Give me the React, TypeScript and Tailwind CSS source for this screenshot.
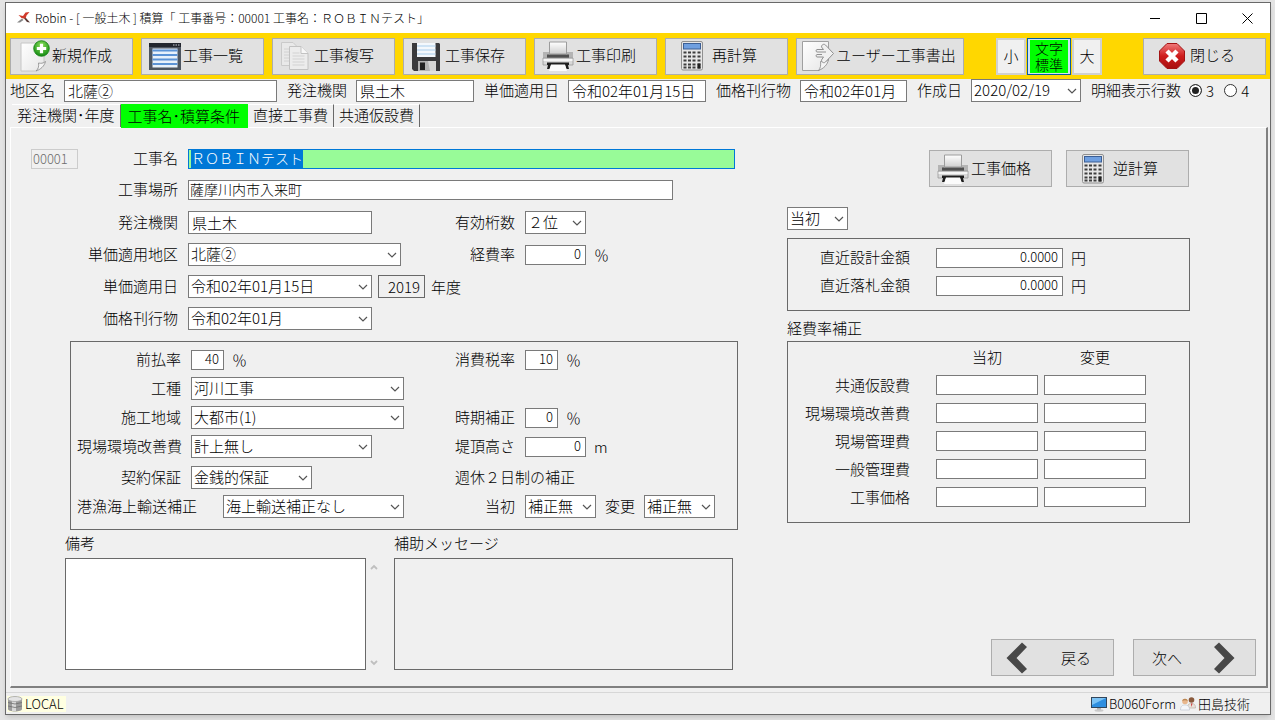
import { useEffect, useRef, useState } from 'react'
import type { InputHTMLAttributes, ReactNode } from 'react'
import clsx from 'clsx'

/* ---------- icons ---------- */

function NewIcon() {
  return (
    <svg width="32" height="32" viewBox="0 0 32 32" aria-hidden="true">
      <defs>
        <linearGradient id="paper" x1="0" y1="0" x2="1" y2="1">
          <stop offset="0" stopColor="#ffffff" />
          <stop offset="1" stopColor="#e6e6e6" />
        </linearGradient>
        <radialGradient id="plus" cx="0.5" cy="0.3" r="0.7">
          <stop offset="0" stopColor="#8be05a" />
          <stop offset="1" stopColor="#128a12" />
        </radialGradient>
      </defs>
      <path d="M3 3H26V22L18 31H3Z" fill="url(#paper)" stroke="#c6c6c6" />
      <path d="M27.500 21.500C25 23.500 23 23.500 20.500 23C21 26 20.500 29 18 31C22.500 29.500 26.500 26 27.500 21.500Z" fill="#f5f5f5" stroke="#8a8a8a" strokeWidth="0.8" />
      <circle cx="23.500" cy="8.500" r="7.800" fill="url(#plus)" stroke="#0f7d0f" strokeWidth="0.8" />
      <path d="M23.500 3.800V13.200M18.800 8.500H28.200" stroke="#fff" strokeWidth="3.200" />
    </svg>
  )
}

function ListIcon() {
  return (
    <svg width="32" height="32" viewBox="0 0 32 32" aria-hidden="true">
      <path d="M0 3H32V30H0Z" fill="#4d5560" />
      <path d="M0 3H32V7H0Z" fill="#22262e" />
      <path d="M24 5h1.500M26.500 5h1.500M29 5h1.500" stroke="#c9ced6" strokeWidth="1" />
      <path d="M3.500 8.500H28.500V27.500H3.500Z" fill="#e8f1fb" />
      <path d="M3.500 10.500h25M3.500 15h25M3.500 19.500h25M3.500 24h25" stroke="#5c93d6" strokeWidth="2.200" />
    </svg>
  )
}

function CopyIcon() {
  return (
    <svg width="32" height="32" viewBox="0 0 32 32" aria-hidden="true">
      <path d="M1.500 2.500H13L18.500 8V25.500H1.500Z" fill="#e9e9e9" stroke="#cacaca" />
      <path d="M4 9h6M4 12h6M4 15h6M4 18h6M4 21h6" stroke="#d2d2d2" />
      <path d="M9.500 6.500H21L28 13.500V29.500H9.500Z" fill="#ececec" stroke="#c2c2c2" />
      <path d="M21 6.500V13.500H28" fill="#f8f8f8" stroke="#c2c2c2" />
      <path d="M12.500 13h7M12.500 16h12M12.500 19h12M12.500 22h12M12.500 25h12" stroke="#d2d2d2" />
    </svg>
  )
}

function SaveIcon() {
  return (
    <svg width="32" height="32" viewBox="0 0 32 32" aria-hidden="true">
      <path d="M1 3H28L29 4V31H3L1 29Z" fill="#3a3a3c" />
      <path d="M6 3H24.500V17H6Z" fill="#f4f8fc" />
      <path d="M6 6h18.500M6 10h18.500M6 14h18.500" stroke="#a8cdec" strokeWidth="1" />
      <path d="M7 21H25V31H7Z" fill="#b4b4b4" />
      <path d="M9 22.500H14V30H9Z" fill="#222" />
      <path d="M17 21H25V31H19Z" fill="#d6d6d6" />
    </svg>
  )
}

function PrinterIcon() {
  return (
    <svg width="32" height="32" viewBox="0 0 32 32" aria-hidden="true">
      <defs>
        <linearGradient id="sheet" x1="0" y1="0" x2="0" y2="1">
          <stop offset="0" stopColor="#ffffff" />
          <stop offset="1" stopColor="#cfcfcf" />
        </linearGradient>
      </defs>
      <path d="M1 12H7V17H25V12H31V19H1Z" fill="#b4b4b4" />
      <path d="M7.500 2H24.500V14H7.500Z" fill="url(#sheet)" stroke="#9c9c9c" />
      <path d="M5 14.500H27V18H5Z" fill="#505050" />
      <path d="M1 18H31V25H1Z" fill="#d8d8d8" stroke="#9a9a9a" strokeWidth="0.800" />
      <path d="M1.500 20H30.500" stroke="#fff" strokeWidth="1.500" />
      <path d="M5 22.500H27V25H26L27 29H24.500L23 25H9L7.500 29H5L6 25H5Z" fill="#1e1e1e" />
      <path d="M9 24.500H23L25 31H7Z" fill="#fbfbfb" />
    </svg>
  )
}

const keyRows = [11.5, 15.5, 19.5, 23.5, 26.5]
const keyCols = [3.5, 8, 12.5, 17.5]

function CalculatorIcon() {
  return (
    <svg width="24" height="32" viewBox="0 0 24 32" aria-hidden="true">
      <rect x="1.500" y="1.500" width="21" height="28.500" rx="1.500" fill="#e6e6e6" stroke="#909090" />
      <rect x="3.500" y="3.500" width="17" height="5.500" fill="#6f9fe0" stroke="#3c5f95" />
      {keyRows.map(y => keyCols.map(x => <rect key={`${x}-${y}`} x={x} y={y} width="3" height="2" fill="#3d3d3d" />))}
      <rect x="17.500" y="23.500" width="3" height="5" fill="#222" />
    </svg>
  )
}

function ExportIcon() {
  return (
    <svg width="32" height="32" viewBox="0 0 32 32" aria-hidden="true">
      <path d="M0.500 1.500H26.500V20L17 30.500H0.500Z" fill="url(#paper)" stroke="#a0a0a0" />
      <path d="M26.500 19.500C24 21.500 21 22 18.500 21.500C19 25 18.500 28.500 16.500 30.500C21.500 28.500 25.500 25 26.500 19.500Z" fill="#f4f4f4" stroke="#858585" strokeWidth="0.800" />
      <path
        d="M15 9.500H21.500L19.500 7C19.500 4.500 22 3.500 23.500 5L31.500 13.500L23.500 22C22 23.500 19.500 22.500 19.500 20L21.500 17H15C13.800 17 13.800 14.500 15 14.500H20M15 9.500C13.800 9.500 13.800 12 15 12H24"
        fill="#f0f0f0"
        stroke="#909090"
      />
    </svg>
  )
}

function CloseIcon() {
  return (
    <svg width="28" height="28" viewBox="0 0 28 28" aria-hidden="true">
      <defs>
        <linearGradient id="stop" x1="0" y1="0" x2="0" y2="1">
          <stop offset="0" stopColor="#f07a7a" />
          <stop offset="0.500" stopColor="#cf1d1d" />
          <stop offset="1" stopColor="#a80f0f" />
        </linearGradient>
      </defs>
      <path d="M9 1.500H19L26.500 9V19L19 26.500H9L1.500 19V9Z" fill="url(#stop)" stroke="#a31313" />
      <path d="M9 9L19 19M19 9L9 19" stroke="#fff" strokeWidth="4.500" />
    </svg>
  )
}

function ChevronIcon({ flip = false }: { flip?: boolean }) {
  return (
    <svg width="22" height="32" viewBox="0 0 22 32" className={clsx(flip && 'rotate-180')} aria-hidden="true">
      <path d="M16 0.500L21 5L10.500 16L21 27L16 31.500L0.500 16Z" fill="#484848" />
    </svg>
  )
}

function RobinIcon() {
  return (
    <svg width="14" height="12" viewBox="0 0 14 12" aria-hidden="true">
      <path d="M8.500 0.500L12.500 0L9.500 3.500L8.500 7L4.500 6L1.500 3L6 4Z" fill="#d03a2b" />
      <path d="M0 10.500L5 6.500L6.500 8L3 10.500Z" fill="#888" />
      <path d="M7 6.500L9 6L13 10.500L10 10Z" fill="#5a3a36" />
    </svg>
  )
}

function DatabaseIcon() {
  return (
    <svg width="16" height="16" viewBox="0 0 16 16" aria-hidden="true">
      <path d="M1 3V13C1 14.500 4 15.500 8 15.500S15 14.500 15 13V3Z" fill="#9b9b9b" />
      <path d="M5 5V15H9V5Z" fill="#d8d8d8" />
      <path d="M1 6.500Q8 9.500 15 6.500M1 10Q8 13 15 10" stroke="#6e6e6e" fill="none" strokeWidth="0.800" />
      <ellipse cx="8" cy="3" rx="7" ry="2.500" fill="#e4e4e4" stroke="#a3a3a3" strokeWidth="0.800" />
    </svg>
  )
}

function MonitorIcon() {
  return (
    <svg width="16" height="16" viewBox="0 0 16 16" aria-hidden="true">
      <rect x="0.500" y="1.500" width="15" height="10" fill="#2f8fe0" stroke="#31465c" />
      <path d="M1 2H15L1 9Z" fill="#7cc3f5" />
      <path d="M6 12H10V14H6Z" fill="#b5b5b5" />
      <ellipse cx="8" cy="14.500" rx="4.500" ry="1.200" fill="#c9c9c9" />
    </svg>
  )
}

function UsersIcon() {
  return (
    <svg width="16" height="16" viewBox="0 0 16 16" aria-hidden="true">
      <circle cx="11.500" cy="4" r="2.800" fill="#8a5a3c" />
      <path d="M7.500 12C7.500 8.500 9 7.500 11.500 7.500S15.500 8.500 15.500 12Z" fill="#e9e2da" stroke="#b3a79c" strokeWidth="0.600" />
      <path d="M11 7.500L11.500 11L12.500 7.500Z" fill="#c33" />
      <circle cx="5" cy="5.500" r="2.800" fill="#e8b78e" />
      <path d="M2.300 5C2.500 2 7.500 2 7.700 5C6 4 4 4 2.300 5Z" fill="#b98550" />
      <path d="M0.500 14C0.500 10 2.500 9 5 9S9.500 10 9.500 14Z" fill="#f4f6fa" stroke="#b8c0cc" strokeWidth="0.600" />
    </svg>
  )
}

/* ---------- form parts ---------- */

function Label({ htmlFor, children }: { htmlFor: string; children: ReactNode }) {
  return (
    <label htmlFor={htmlFor} className="pb-0.5 text-right leading-[18px] whitespace-nowrap">
      {children}
    </label>
  )
}

function TextBox({ className, ...rest }: InputHTMLAttributes<HTMLInputElement>) {
  return <input type="text" className={clsx('border border-[#7a7a7a] bg-white outline-none', className)} {...rest} />
}

function NumberBox({ className, ...rest }: InputHTMLAttributes<HTMLInputElement>) {
  return <TextBox className={clsx('h-5 px-1 pb-0.5 text-right text-[13px]', className)} {...rest} />
}

function Select({ id, value, className, label }: { id: string; value: string; className: string; label?: string }) {
  return (
    <div className={clsx('relative', className)}>
      <select
        id={id}
        aria-label={label}
        className="block h-[23px] w-full appearance-none border border-[#7a7a7a] bg-white pr-4 pb-0.5 pl-0.5 leading-[18px] outline-none"
      >
        <option>{value}</option>
      </select>
      <svg width="10" height="6" viewBox="0 0 10 6" className="pointer-events-none absolute top-[9px] right-1" aria-hidden="true">
        <path d="M1 1L5 5L9 1" fill="none" stroke="#555" strokeWidth="1.200" />
      </svg>
    </div>
  )
}

function ToolButton({ icon, children, className = 'w-[123px] pl-[7px]' }: { icon: ReactNode; children: ReactNode; className?: string }) {
  return (
    <button
      type="button"
      className={clsx('flex h-[37px] shrink-0 items-center gap-0.5 border border-[#adadad] bg-[#e1e1e1] whitespace-nowrap hover:bg-[#e5f1fb]', className)}
    >
      {icon}
      <span className="pb-0.5">{children}</span>
    </button>
  )
}

/* ---------- page sections ---------- */

function TitleBar() {
  return (
    <header className="flex h-[30px] items-center bg-white pl-[11px]">
      <RobinIcon />
      <h1 className="ml-1 text-xs whitespace-nowrap">Robin - [ 一般土木 ] 積算「 工事番号：00001 工事名：ＲＯＢＩＮテスト」</h1>
      <div className="ml-auto flex h-full">
        <button type="button" aria-label="最小化" className="flex w-[46px] items-center justify-center">
          <svg width="11" height="11" viewBox="0 0 11 11"><path d="M0 5.500H10" stroke="#000" /></svg>
        </button>
        <button type="button" aria-label="最大化" className="flex w-[46px] items-center justify-center">
          <svg width="11" height="11" viewBox="0 0 11 11"><path d="M0.500 0.500H10.500V10.500H0.500Z" fill="none" stroke="#000" /></svg>
        </button>
        <button type="button" aria-label="ウィンドウを閉じる" className="flex w-[46px] items-center justify-center">
          <svg width="11" height="11" viewBox="0 0 11 11"><path d="M0.500 0.500L10.500 10.500M10.500 0.500L0.500 10.500" stroke="#000" /></svg>
        </button>
      </div>
    </header>
  )
}

function Toolbar() {
  return (
    <nav className="flex h-[46px] items-center gap-2 bg-[#ffd700] px-1">
      <ToolButton icon={<NewIcon />}>新規作成</ToolButton>
      <ToolButton icon={<ListIcon />}>工事一覧</ToolButton>
      <ToolButton icon={<CopyIcon />}>工事複写</ToolButton>
      <ToolButton icon={<SaveIcon />}>工事保存</ToolButton>
      <ToolButton icon={<PrinterIcon />}>工事印刷</ToolButton>
      <ToolButton icon={<CalculatorIcon />} className="w-[123px] gap-2 pl-3.5">再計算</ToolButton>
      <ToolButton icon={<ExportIcon />} className="w-[168px] pl-[5px]">ユーザー工事書出</ToolButton>
      <div className="ml-6 flex gap-px">
        <button type="button" className="h-[37px] w-[30px] border-2 border-[#d0d0d0] bg-[#f0f0f0]">小</button>
        <button type="button" className="h-[37px] w-11 border border-[#0a5aa0] bg-[#cfe4f7] px-0.5 py-px">
          <span className="block h-full bg-[#00ff00] text-sm leading-4">文字<br />標準</span>
        </button>
        <button type="button" className="h-[37px] w-[30px] border-2 border-[#d0d0d0] bg-[#f0f0f0]">大</button>
      </div>
      <ToolButton icon={<CloseIcon />} className="ml-auto w-[123px] gap-1 pl-3.5">閉じる</ToolButton>
    </nav>
  )
}

function SummaryField({ id, label, children }: { id: string; label: string; children: ReactNode }) {
  return (
    <div className="flex items-center gap-[9px]">
      <Label htmlFor={id}>{label}</Label>
      {children}
    </div>
  )
}

function SummaryBar() {
  return (
    <section className="flex h-[25px] items-center gap-2.5 pb-0.5 pl-1">
      <SummaryField id="area" label="地区名">
        <TextBox id="area" className="h-[22px] w-[213px] px-[3px]" defaultValue="北薩②" />
      </SummaryField>
      <SummaryField id="client" label="発注機関">
        <TextBox id="client" className="h-[22px] w-[118px] px-[3px]" defaultValue="県土木" />
      </SummaryField>
      <SummaryField id="price-date" label="単価適用日">
        <TextBox id="price-date" className="h-[22px] w-[138px] px-[3px]" defaultValue="令和02年01月15日" />
      </SummaryField>
      <SummaryField id="publication" label="価格刊行物">
        <TextBox id="publication" className="h-[22px] w-[107px] px-[3px]" defaultValue="令和02年01月" />
      </SummaryField>
      <SummaryField id="created" label="作成日">
        <Select id="created" className="w-[110px]" value="2020/02/19" />
      </SummaryField>
      <fieldset className="flex items-center">
        <legend className="float-left mr-2 pb-0.5 leading-[18px] whitespace-nowrap">明細表示行数</legend>
        <RowsRadio value="3" defaultChecked />
        <RowsRadio value="4" />
      </fieldset>
    </section>
  )
}

function RowsRadio({ value, defaultChecked }: { value: string; defaultChecked?: boolean }) {
  return (
    <label className="mr-2.5 flex items-center gap-1 leading-[18px]">
      <input
        type="radio"
        name="rows"
        value={value}
        defaultChecked={defaultChecked}
        className="size-[13px] appearance-none rounded-full border border-[#333] bg-white checked:bg-[#222] checked:shadow-[inset_0_0_0_2px_#fff]"
      />
      {value}
    </label>
  )
}

const tabs = ['発注機関･年度', '工事名･積算条件', '直接工事費', '共通仮設費']

function Tabs() {
  const [active, setActive] = useState(1)

  return (
    <div role="tablist" className="flex h-[23px] pl-1.5">
      {tabs.map((tab, i) => (
        <button
          key={tab}
          type="button"
          role="tab"
          aria-selected={i === active}
          onClick={() => setActive(i)}
          className={clsx(
            'border-t border-r pb-0.5',
            i === active
              ? 'relative h-6 border-[#00ff00] bg-[#00ff00] px-[7px]'
              : 'h-[23px] border-t-white border-r-[#696969] px-[5px]'
          )}
        >
          {tab}
        </button>
      ))}
    </div>
  )
}

function WorkFields() {
  const nameRef = useRef<HTMLInputElement>(null)

  // The work name is ready for overwriting when the form opens
  useEffect(() => {
    nameRef.current?.focus()
    nameRef.current?.select()
  }, [])

  return (
    <div className="flex flex-col gap-[11px]">
      <div className="grid grid-cols-[147px_1fr] items-center gap-x-2.5 gap-y-[11px]">
        <div className="flex items-center justify-between">
          <input
            type="text"
            aria-label="工事番号"
            disabled
            defaultValue="00001"
            className="h-5 w-[47px] border border-[#cccccc] bg-[#f0f0f0] px-px text-[13px] text-[#6d6d6d]"
          />
          <Label htmlFor="work-name">工事名</Label>
        </div>
        <input
          ref={nameRef}
          id="work-name"
          type="text"
          defaultValue="ＲＯＢＩＮテスト"
          className="h-5 w-[547px] border border-[#0078d7] bg-[#98fb98] px-0.5 pb-0.5 text-sm leading-4 outline-none selection:bg-[#0078d7] selection:text-white"
        />
        <Label htmlFor="work-place">工事場所</Label>
        <TextBox id="work-place" className="h-5 w-[485px] px-px pb-0.5 text-sm" defaultValue="薩摩川内市入来町" />
      </div>

      <div className="grid grid-cols-[147px_240px_77px_auto] items-center gap-x-2.5 gap-y-[9px]">
        <Label htmlFor="work-client">発注機関</Label>
        <TextBox id="work-client" className="h-[23px] w-[184px] px-[3px]" defaultValue="県土木" />
        <Label htmlFor="digits">有効桁数</Label>
        <Select id="digits" className="w-[61px]" value="２位" />

        <Label htmlFor="price-area">単価適用地区</Label>
        <Select id="price-area" className="w-[213px]" value="北薩②" />
        <Label htmlFor="expense">経費率</Label>
        <div className="flex items-center gap-2">
          <NumberBox id="expense" className="w-[61px]" defaultValue="0" />％
        </div>

        <Label htmlFor="work-date">単価適用日</Label>
        <div className="col-span-3 flex items-center gap-1.5">
          <Select id="work-date" className="w-[184px]" value="令和02年01月15日" />
          <input
            id="fiscal-year"
            type="text"
            readOnly
            defaultValue="2019"
            className="h-[23px] w-[47px] border border-[#696969] bg-[#f0f0f0] px-1 text-right outline-none"
          />
          <label htmlFor="fiscal-year">年度</label>
        </div>

        <Label htmlFor="work-book">価格刊行物</Label>
        <Select id="work-book" className="w-[184px]" value="令和02年01月" />
      </div>
    </div>
  )
}

function RateFields() {
  return (
    <section className="mt-[11px] ml-[39px] flex h-[189px] flex-col gap-2 border border-[#696969] pt-1.5 pl-1.5">
      <div className="grid auto-rows-[23px] grid-cols-[104px_254px_60px_auto] items-center gap-x-2.5 gap-y-1.5">
        <Label htmlFor="advance">前払率</Label>
        <div className="flex items-center gap-2">
          <NumberBox id="advance" className="w-[33px]" defaultValue="40" />％
        </div>
        <Label htmlFor="tax">消費税率</Label>
        <div className="flex items-center gap-2">
          <NumberBox id="tax" className="w-[33px]" defaultValue="10" />％
        </div>

        <Label htmlFor="work-type">工種</Label>
        <Select id="work-type" className="col-span-3 w-[213px]" value="河川工事" />

        <Label htmlFor="region">施工地域</Label>
        <Select id="region" className="w-[213px]" value="大都市(1)" />
        <Label htmlFor="season">時期補正</Label>
        <div className="flex items-center gap-2">
          <NumberBox id="season" className="w-[33px]" defaultValue="0" />％
        </div>

        <Label htmlFor="environment">現場環境改善費</Label>
        <Select id="environment" className="w-[181px]" value="計上無し" />
        <Label htmlFor="height">堤頂高さ</Label>
        <div className="flex items-center gap-2">
          <NumberBox id="height" className="w-[61px]" defaultValue="0" />m
        </div>
      </div>

      <div className="grid auto-rows-[23px] grid-cols-[104px_254px_60px_auto] items-center gap-x-2.5 gap-y-1.5">
        <Label htmlFor="guarantee">契約保証</Label>
        <Select id="guarantee" className="w-[121px]" value="金銭的保証" />
        <p className="col-span-2 pb-0.5 leading-[18px]">週休２日制の補正</p>

        <div className="col-span-2 flex items-center gap-[26px]">
          <Label htmlFor="sea">港漁海上輸送補正</Label>
          <Select id="sea" className="w-[181px]" value="海上輸送補正なし" />
        </div>
        <Label htmlFor="holiday-first">当初</Label>
        <div className="flex items-center gap-[9px]">
          <Select id="holiday-first" className="w-[71px]" value="補正無" />
          <Label htmlFor="holiday-change">変更</Label>
          <Select id="holiday-change" className="w-[71px]" value="補正無" />
        </div>
      </div>
    </section>
  )
}

function Notes() {
  return (
    <div className="flex gap-3 pt-1 pl-[34px]">
      <div>
        <label htmlFor="remarks" className="block h-6 leading-[18px]">備考</label>
        <div className="flex">
          <textarea id="remarks" className="block h-28 w-[301px] resize-none border border-[#696969] bg-white px-1 outline-none" />
          <div className="flex w-4 flex-col items-center justify-between pt-1.5 pb-1">
            <svg width="8" height="6" viewBox="0 0 8 6"><path d="M1 5L4 2L7 5" fill="none" stroke="#bfbfbf" strokeWidth="1.800" /></svg>
            <svg width="8" height="6" viewBox="0 0 8 6"><path d="M1 1L4 4L7 1" fill="none" stroke="#bfbfbf" strokeWidth="1.800" /></svg>
          </div>
        </div>
      </div>
      <div>
        <label htmlFor="messages" className="block h-6 leading-[18px]">補助メッセージ</label>
        <textarea id="messages" readOnly className="block h-28 w-[339px] resize-none border border-[#696969] bg-[#f0f0f0] px-1 outline-none" />
      </div>
    </div>
  )
}

const corrections = ['共通仮設費', '現場環境改善費', '現場管理費', '一般管理費', '工事価格']

function PricePanel() {
  return (
    <div className="flex flex-1 flex-col">
      <div className="flex w-[402px] justify-end gap-3.5 pt-px">
        <ToolButton icon={<PrinterIcon />}>工事価格</ToolButton>
        <ToolButton icon={<CalculatorIcon />} className="w-[123px] gap-2 pl-3.5">逆計算</ToolButton>
      </div>

      <Select id="stage" label="設計区分" className="mt-5 w-[61px]" value="当初" />

      <section className="mt-2 flex h-[73px] w-[403px] flex-col gap-2 border border-[#696969] pt-[9px]">
        <div className="flex items-center gap-[26px] pl-8">
          <Label htmlFor="design-price">直近設計金額</Label>
          <div className="flex items-center gap-2">
            <NumberBox id="design-price" className="w-[127px]" defaultValue="0.0000" />円
          </div>
        </div>
        <div className="flex items-center gap-[26px] pl-8">
          <Label htmlFor="bid-price">直近落札金額</Label>
          <div className="flex items-center gap-2">
            <NumberBox id="bid-price" className="w-[127px]" defaultValue="0.0000" />円
          </div>
        </div>
      </section>

      <h2 className="mt-1.5 h-6 leading-[22px]">経費率補正</h2>
      <section className="h-[182px] w-[403px] border border-[#696969]">
        <table className="border-collapse">
          <thead>
            <tr className="h-[29px]">
              <td className="w-[148px]" />
              <th scope="col" className="w-[108px] pr-1.5 font-light">当初</th>
              <th scope="col" className="w-[108px] pr-1.5 font-light">変更</th>
            </tr>
          </thead>
          <tbody>
            {corrections.map(name => (
              <tr key={name} className="h-7">
                <th scope="row" className="pr-[26px] text-right font-light whitespace-nowrap">{name}</th>
                <td><NumberBox aria-label={`${name} 当初`} className="block w-[102px]" /></td>
                <td><NumberBox aria-label={`${name} 変更`} className="block w-[102px]" /></td>
              </tr>
            ))}
          </tbody>
        </table>
      </section>

      <div className="mt-auto flex justify-end gap-[19px]">
        <button type="button" className="flex h-[37px] w-[123px] items-center gap-[33px] border border-[#adadad] bg-[#e1e1e1] pl-3.5">
          <ChevronIcon />戻る
        </button>
        <button type="button" className="flex h-[37px] w-[123px] items-center justify-between border border-[#adadad] bg-[#e1e1e1] pr-5 pl-[18px]">
          次へ<ChevronIcon flip />
        </button>
      </div>
    </div>
  )
}

function StatusBar() {
  return (
    <footer className="mt-1 flex h-[22px] items-center border-t border-[#d7d7d7] pr-5 pl-px text-[13px]">
      <span className="flex items-center gap-0.5 bg-[#ffffe1] pr-0.5 leading-4"><DatabaseIcon />LOCAL</span>
      <span className="ml-auto flex items-center gap-0.5"><MonitorIcon />B0060Form</span>
      <span className="ml-1 flex items-center gap-0.5"><UsersIcon />田島技術</span>
    </footer>
  )
}

export default function App() {
  return (
    <div className="flex min-h-screen flex-col bg-[#e4e4e4] pt-0.5 pr-1 pb-[5px] pl-[5px] font-['Noto_Sans_CJK_JP',sans-serif] text-[15px] leading-5 font-light text-black">
      <div className="flex flex-1 flex-col border border-[#696969] bg-[#f0f0f0] shadow-md">
        <TitleBar />
        <Toolbar />
        <SummaryBar />
        <Tabs />
        <main
          role="tabpanel"
          className="mr-0.5 ml-1 flex flex-1 gap-[49px] border-t border-r-2 border-b-2 border-l border-t-white border-r-[#808080] border-b-[#808080] border-l-white pt-[21px] pr-2.5 pb-2.5 pl-5"
        >
          <div className="w-[707px] shrink-0">
            <WorkFields />
            <RateFields />
            <Notes />
          </div>
          <PricePanel />
        </main>
        <StatusBar />
      </div>
    </div>
  )
}
